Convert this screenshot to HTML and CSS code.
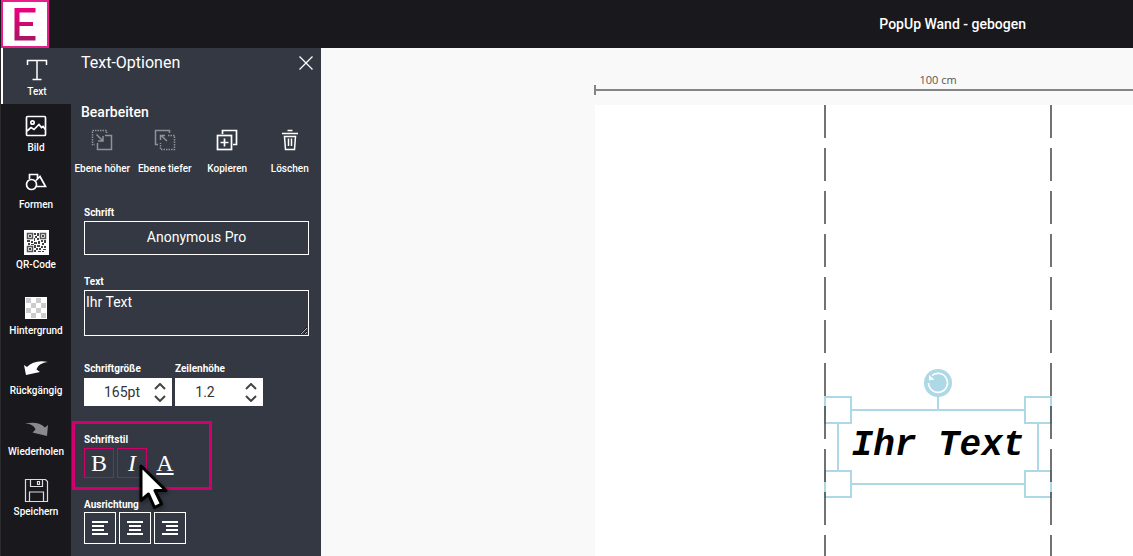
FILE: index.html
```html
<!DOCTYPE html>
<html lang="de">
<head>
<meta charset="utf-8">
<meta name="viewport" content="width=device-width, initial-scale=1">
<title>PopUp Wand - gebogen</title>
<link rel="stylesheet" href="styles.css">
</head>
<body>
<div class="app">
  <header class="topbar">
    <a class="logo" href="#" aria-label="Startseite">
      <svg width="48" height="48" viewBox="0 0 48 48" aria-hidden="true">
        <defs><linearGradient id="brand" x1="0" y1="0" x2="0" y2="1"><stop offset="0" stop-color="#ec0080"/><stop offset="1" stop-color="#a81560"/></linearGradient></defs>
        <rect width="48" height="48" fill="#fff"/>
        <rect x="1" y="1" width="46" height="46" fill="none" stroke="#e91e8c" stroke-width="2"/>
        <path d="M13.500 8H34.500v4.500H18.500v9.500h13.500v4H18.500v10H34.500v4.500H13.500z" fill="url(#brand)"/>
      </svg>
    </a>
    <h1 class="product">PopUp Wand - gebogen</h1>
  </header>

  <div class="workspace">
    <nav class="tools" aria-label="Werkzeuge">
      <button class="tool tool-active" type="button">
        <svg class="tool-icon" viewBox="0 0 28 28" aria-hidden="true"><path d="M4.500 9V4.500h19V9M14 4.500v19M9.500 23.500h9" fill="none" stroke="#fff" stroke-width="1.500"/></svg>
        <span>Text</span>
      </button>
      <button class="tool" type="button">
        <svg class="tool-icon" viewBox="0 0 28 28" aria-hidden="true"><g fill="none" stroke="#fff" stroke-width="1.700"><rect x="4.500" y="4.500" width="19" height="19" rx="1"/><circle cx="10.500" cy="10.500" r="1.700"/><path d="M5 19l4-3.500 3 2 5-5 2.500 3 1.500-1 2.500 3"/></g></svg>
        <span>Bild</span>
      </button>
      <button class="tool tool-formen" type="button">
        <svg class="tool-icon" viewBox="0 0 28 28" aria-hidden="true"><g fill="none" stroke="#fff" stroke-width="1.700"><path d="M7.500 10V5.500h8v4"/><circle cx="9.500" cy="15.500" r="5"/><path d="M14 11.500l4-4 5.500 10H14.500"/></g></svg>
        <span>Formen</span>
      </button>
      <button class="tool tool-spaced" type="button">
        <svg class="tool-icon" viewBox="0 0 28 28" aria-hidden="true">
          <rect x="2" y="1" width="25" height="25" fill="#fff"/>
          <g transform="translate(4 3)">
            <g fill="none" stroke="#555" stroke-width="1.500"><rect x="1.500" y="1.500" width="5" height="5"/><rect x="14.500" y="1.500" width="5" height="5"/><rect x="1.500" y="14.500" width="5" height="5"/></g>
            <path fill="#444" d="M3 3h2v2H3zM16 3h2v2h-2zM3 16h2v2H3zM8 1h2v2H8zM11 1h2v3h-2zM9 4h2v2H9zM8 6h1v3H8zM11 6h2v2h-2zM1 8h3v2H1zM5 9h2v2H5zM2 11h2v2H2zM8 10h3v2H8zM12 9h2v3h-2zM15 8h2v2h-2zM18 8h2v3h-2zM16 11h2v2h-2zM5 12h3v1H5zM8 13h2v3H8zM11 13h3v2h-3zM10 16h2v2h-2zM8 18h2v2H8zM13 16h2v2h-2zM15 14h2v2h-2zM18 14h2v2h-2zM17 17h3v1h-3zM12 19h3v1h-3zM16 19h2v1h-2z"/>
          </g>
        </svg>
        <span>QR-Code</span>
      </button>
      <button class="tool tool-wide" type="button">
        <svg class="tool-icon" viewBox="0 0 28 28" aria-hidden="true"><rect x="3" y="2" width="22" height="22" fill="#fff"/><path fill="#ccc" d="M4 3h5v5H4zM14 3h5v5h-5zM9 8h5v5H9zM19 8h5v5h-5zM4 13h5v5H4zM14 13h5v5h-5zM9 18h5v5H9zM19 18h5v5h-5z"/></svg>
        <span>Hintergrund</span>
      </button>
      <button class="tool tool-spaced" type="button">
        <svg class="tool-icon" viewBox="0 0 28 28" aria-hidden="true"><path fill="#fff" d="M2 10l3 2c5-5 12-7 21-5-6 .5-10 3-11.500 7.500L18 17 4 20z"/></svg>
        <span>Rückgängig</span>
      </button>
      <button class="tool tool-spaced tool-low" type="button">
        <svg class="tool-icon" viewBox="0 0 28 28" aria-hidden="true"><path fill="#8a8a8c" d="M26 9l-3 2.500C18 7 12 6 3 7.500c6 .5 9 2 10.500 6L10.500 16.500 25 20z"/></svg>
        <span>Wiederholen</span>
      </button>
      <button class="tool tool-spaced" type="button">
        <svg class="tool-icon" viewBox="0 0 28 28" aria-hidden="true"><g fill="none" stroke="#ddd" stroke-width="1.200"><path d="M3.500 3.500h20l2 2v20h-22z"/><path d="M8.500 3.500v7h12v-7M15.500 5.500h2v3h-2zM7.500 25v-9h14v9"/></g></svg>
        <span>Speichern</span>
      </button>
    </nav>

    <aside class="panel">
      <div class="panel-head">
        <h2 class="panel-title">Text-Optionen</h2>
        <button class="close" type="button" aria-label="Schließen">
          <svg width="16" height="16" viewBox="0 0 16 16" aria-hidden="true"><path d="M1.500 1.500l13 13M14.500 1.500l-13 13" stroke="#fff" stroke-width="1.300"/></svg>
        </button>
      </div>

      <h3 class="section-title">Bearbeiten</h3>
      <div class="actions">
        <button class="action" type="button">
          <svg width="22" height="22" viewBox="0 0 22 22" aria-hidden="true"><g fill="none" stroke="#8f9299" stroke-width="1.500"><path d="M15.500 4V1.500h-14v14H4" stroke-dasharray="1.500 1"/><path d="M14 6.500h6.500v14h-14V14M5.500 5.500l6 6M12 7v5H7"/></g></svg>
          <span>Ebene höher</span>
        </button>
        <button class="action" type="button">
          <svg width="22" height="22" viewBox="0 0 22 22" aria-hidden="true"><g fill="none" stroke="#8f9299" stroke-width="1.500"><path d="M15.500 4V1.500h-14v14H4M13 12L7 6.500M6.500 11V6.500H11"/><path d="M14 6.500h6.500v14h-14V14" stroke-dasharray="1.500 1"/></g></svg>
          <span>Ebene tiefer</span>
        </button>
        <button class="action" type="button">
          <svg width="22" height="22" viewBox="0 0 22 22" aria-hidden="true"><g fill="none" stroke="#fff" stroke-width="1.700"><path d="M6.500 5V1.500h14v14H17"/><rect x="1.500" y="6.500" width="14" height="14"/><path d="M8.500 9.500v8M4.500 13.500h8"/></g></svg>
          <span>Kopieren</span>
        </button>
        <button class="action" type="button">
          <svg width="22" height="22" viewBox="0 0 22 22" aria-hidden="true"><g fill="none" stroke="#fff" stroke-width="1.500"><path d="M3 4.500h16M8.500 1.500h5M5.500 7.500l1 13h9l1-13zM9.500 9.500v7.500M12.500 9.500v7.500"/></g></svg>
          <span>Löschen</span>
        </button>
      </div>

      <form class="options">
        <div class="field">
          <label class="label" for="font">Schrift</label>
          <button class="font-picker" id="font" type="button">Anonymous Pro</button>
        </div>
        <div class="field field-text">
          <label class="label" for="text">Text</label>
          <textarea class="text-input" id="text">Ihr Text</textarea>
        </div>
        <div class="spinners">
          <div class="field">
            <label class="label" for="size">Schriftgröße</label>
            <div class="spinner">
              <input class="spinner-value" id="size" type="text" value="165pt">
              <div class="steps">
                <button class="step" type="button" aria-label="Größer"><svg width="12" height="7" viewBox="0 0 12 7" aria-hidden="true"><path d="M1 6l5-5 5 5" fill="none" stroke="#444" stroke-width="2"/></svg></button>
                <button class="step" type="button" aria-label="Kleiner"><svg width="12" height="7" viewBox="0 0 12 7" aria-hidden="true"><path d="M1 1l5 5 5-5" fill="none" stroke="#444" stroke-width="2"/></svg></button>
              </div>
            </div>
          </div>
          <div class="field">
            <label class="label" for="leading">Zeilenhöhe</label>
            <div class="spinner">
              <input class="spinner-value spinner-short" id="leading" type="text" value="1.2">
              <div class="steps">
                <button class="step" type="button" aria-label="Höher"><svg width="12" height="7" viewBox="0 0 12 7" aria-hidden="true"><path d="M1 6l5-5 5 5" fill="none" stroke="#444" stroke-width="2"/></svg></button>
                <button class="step" type="button" aria-label="Niedriger"><svg width="12" height="7" viewBox="0 0 12 7" aria-hidden="true"><path d="M1 1l5 5 5-5" fill="none" stroke="#444" stroke-width="2"/></svg></button>
              </div>
            </div>
          </div>
        </div>

        <div class="style-group" role="group" aria-labelledby="style-label">
          <span class="label" id="style-label">Schriftstil</span>
          <div class="style-buttons">
            <button class="style style-on" type="button" aria-pressed="true">B</button>
            <button class="style style-on style-italic" type="button" aria-pressed="true">I</button>
            <button class="style style-underline" type="button" aria-pressed="false">A</button>
          </div>
          <svg class="pointer" width="34" height="52" viewBox="0 0 34 52" aria-hidden="true"><path d="M4 4v34.500l7.500-6.500 6 13.500 7-3.500-6.500-13.500h11z" fill="#fff" stroke="#000" stroke-width="3" stroke-linejoin="round"/></svg>
        </div>

        <div class="align-group" role="group" aria-labelledby="align-label">
          <span class="label" id="align-label">Ausrichtung</span>
          <div class="align-buttons">
            <button class="align" type="button" aria-label="Linksbündig"><svg width="16" height="14" viewBox="0 0 16 14" aria-hidden="true"><path d="M0 1h16M0 5h12M0 9h12M0 13h16" stroke="#fff" stroke-width="2"/></svg></button>
            <button class="align" type="button" aria-label="Zentriert"><svg width="16" height="14" viewBox="0 0 16 14" aria-hidden="true"><path d="M0 1h16M2 5h12M2 9h12M0 13h16" stroke="#fff" stroke-width="2"/></svg></button>
            <button class="align" type="button" aria-label="Rechtsbündig"><svg width="16" height="14" viewBox="0 0 16 14" aria-hidden="true"><path d="M0 1h16M4 5h12M4 9h12M0 13h16" stroke="#fff" stroke-width="2"/></svg></button>
          </div>
        </div>
      </form>
    </aside>

    <main class="stage">
      <div class="ruler"><span class="ruler-label">100 cm</span><div class="ruler-line"></div></div>
      <div class="artboard">
        <div class="selection">
          <div class="selected-text">Ihr Text</div>
          <i class="handle handle-tl"></i><i class="handle handle-tr"></i><i class="handle handle-bl"></i><i class="handle handle-br"></i>
          <svg class="rotate" width="30" height="42" viewBox="0 0 30 42" aria-hidden="true"><path d="M15 28v14" stroke="#add8e6" stroke-width="2"/><circle cx="15" cy="14" r="14" fill="#add8e6"/><path d="M5.500 14A9.500 9.500 0 1 0 9 6.500" fill="none" stroke="#fff" stroke-width="1.600"/><path d="M6 6v5.500l5.500-1z" fill="#fff"/></svg>
        </div>
        <div class="fold fold-left"></div>
        <div class="fold fold-right"></div>
      </div>
    </main>
  </div>
</div>
</body>
</html>
```
FILE: styles.css
```css
* { box-sizing: border-box; }

body {
  margin: 0;
  font-family: Roboto, "Liberation Sans", sans-serif;
  color: #fff;
  background: #f9f9f9;
}

button, input, textarea { font: inherit; color: inherit; }

button {
  margin: 0;
  padding: 0;
  border: 0;
  background: none;
  cursor: pointer;
}

h1, h2, h3 { margin: 0; }

.app {
  display: flex;
  flex-direction: column;
  height: 100vh;
  overflow: hidden;
}

.topbar {
  display: flex;
  flex: none;
  align-items: center;
  justify-content: space-between;
  padding: 0 107px 0 1px;
  background: #19181d;
}

.logo { display: flex; }

.product {
  font-size: 14px;
  font-weight: 500;
  line-height: 20px;
}

.workspace {
  display: flex;
  flex: 1;
  min-height: 0;
}

/* Tool strip */
.tools {
  display: flex;
  flex: none;
  flex-direction: column;
  width: 71px;
  border-left: 1px solid #2b2b2d;
  background: #19181d;
}

.tool {
  display: flex;
  flex: none;
  flex-direction: column;
  align-items: center;
  justify-content: flex-end;
  height: 56px;
  padding-bottom: 5px;
  font-size: 10px;
  font-weight: 500;
  line-height: 14px;
}

.tool-active {
  border-left: 2px solid #fff;
  background: #333842;
}

.tool-formen { height: 57px; }
.tool-spaced { height: 60px; }
.tool-low { height: 61px; }
.tool-wide { height: 66px; }

.tool-icon {
  width: 28px;
  height: 28px;
  margin-bottom: 1px;
}

/* Options panel */
.panel {
  flex: none;
  width: 250px;
  overflow: hidden;
  background: #333842;
}

.panel-head {
  display: flex;
  align-items: center;
  justify-content: space-between;
  height: 30px;
  padding: 0 7px 0 10px;
}

.panel-title {
  font-size: 16px;
  font-weight: 400;
  line-height: 20px;
}

.close { display: flex; }

.section-title {
  margin: 24px 10px 7px;
  font-size: 14px;
  font-weight: 500;
  line-height: 20px;
}

.actions {
  display: grid;
  grid-template-columns: repeat(4, 1fr);
}

.action {
  display: flex;
  flex-direction: column;
  align-items: center;
  gap: 11px;
  font-size: 10px;
  font-weight: 500;
  line-height: 14px;
  white-space: nowrap;
}

.options { padding: 31px 12px 0 13px; }

.label {
  display: block;
  font-size: 10px;
  font-weight: 700;
  line-height: 12px;
}

.font-picker {
  display: block;
  width: 100%;
  height: 34px;
  margin-top: 2px;
  padding-bottom: 2px;
  border: 1px solid #fff;
  font-size: 14px;
}

.field-text { margin-top: 21px; }

.text-input {
  display: block;
  width: 100%;
  height: 46px;
  margin-top: 2px;
  padding: 2px 1px;
  border: 1px solid #fff;
  background: none;
  font-size: 14px;
  line-height: 18px;
}

.spinners {
  display: flex;
  gap: 3px;
  margin-top: 27px;
}

.spinner {
  display: flex;
  align-items: center;
  width: 88px;
  height: 28px;
  margin-top: 3px;
  padding-right: 6px;
  background: #fff;
}

.spinner-value {
  flex: 1;
  min-width: 0;
  padding: 0 0 0 6px;
  border: 0;
  background: none;
  color: #333;
  font-size: 14px;
  text-align: center;
}

.spinner-short { padding: 0 10px 0 0; }

.steps {
  display: flex;
  flex-direction: column;
  gap: 5px;
}

.step { display: flex; }

.style-group {
  position: relative;
  width: 140px;
  margin: 15px 0 0 -12px;
  padding: 10px 9px 9px;
  border: 3px solid #d1006c;
}

.style-buttons {
  display: flex;
  gap: 3px;
  margin-top: 2px;
}

.style {
  width: 30px;
  height: 30px;
  border: 1px solid transparent;
  font-family: "Liberation Serif", serif;
  font-size: 24px;
  line-height: 28px;
}

.style-on { border-color: #d1006c; }
.style-italic { font-style: italic; }
.style-underline { text-decoration: underline; }

/* Mouse pointer lying over the style buttons */
.pointer {
  position: absolute;
  top: 38px;
  left: 62px;
  z-index: 1;
  filter: drop-shadow(1px 2px 2px rgba(0, 0, 0, 0.4));
}

.align-group { margin-top: 9px; }

.align-buttons {
  display: flex;
  gap: 3px;
  margin-top: 1px;
}

.align {
  display: flex;
  align-items: center;
  justify-content: center;
  width: 32px;
  height: 32px;
  border: 1px solid #fff;
}

/* Canvas */
.stage {
  flex: 1;
  min-width: 0;
  overflow: hidden;
  padding: 24px 0 0 273px;
  background: #f9f9f9;
}

.ruler {
  width: 688px;
  color: #555;
  font-family: "Open Sans", sans-serif;
  font-size: 11px;
  line-height: 16px;
  text-align: center;
}

.ruler-label { display: block; }

.ruler-line {
  height: 10px;
  margin: -3px 0 10px;
  border: solid #858585;
  border-width: 0 2px;
  background: linear-gradient(#858585, #858585) center / 100% 2px no-repeat;
}

.artboard {
  position: relative;
  width: 686px;
  height: 1000px;
  margin-left: 1px;
  background: #fff;
}

.fold {
  position: absolute;
  top: 0;
  bottom: 0;
  width: 2px;
  background: repeating-linear-gradient(#444 0 33px, transparent 33px 43px);
  opacity: 0.75;
}

.fold-left { left: 229px; }
.fold-right { left: 455px; }

.selection {
  position: absolute;
  top: 304px;
  left: 242px;
  width: 202px;
  height: 76px;
  border: 2px solid #add8e6;
}

.selected-text {
  color: #000;
  font-family: "Liberation Mono", monospace;
  font-size: 36px;
  font-style: italic;
  font-weight: 700;
  line-height: 70px;
  text-align: center;
  white-space: nowrap;
}

.handle {
  position: absolute;
  width: 28px;
  height: 28px;
  border: 2px solid #add8e6;
  background: #fff;
}

.handle-tl { top: -15px; left: -15px; }
.handle-tr { top: -15px; right: -15px; }
.handle-bl { bottom: -15px; left: -15px; }
.handle-br { bottom: -15px; right: -15px; }

.rotate {
  position: absolute;
  top: -42px;
  left: 84px;
}
```
